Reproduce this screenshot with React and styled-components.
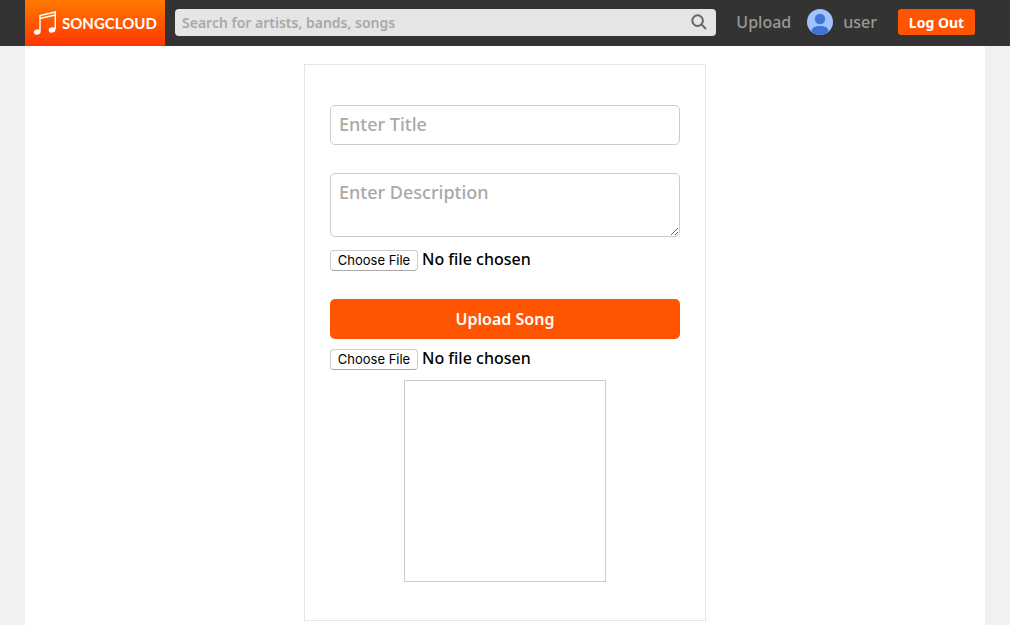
import React from 'react';
import styled, { createGlobalStyle } from 'styled-components';

const GlobalStyle = createGlobalStyle`
  *, *::before, *::after { box-sizing: border-box; }
  body {
    margin: 0;
    background: #f1f1f1;
    color: #000;
    font-family: "Noto Sans", "Open Sans", sans-serif;
    font-size: 16px;
  }
  input, textarea, button { font-family: inherit; }
`;

const Page = styled.div`
  display: flex;
  flex-direction: column;
  min-height: 100vh;
`;

const Header = styled.header`
  background: #333;
`;

const HeaderInner = styled.div`
  display: flex;
  align-items: center;
  max-width: 960px;
  height: 46px;
  margin: 0 auto;
  padding: 0 10px 2px 0;
`;

const Logo = styled.a`
  display: flex;
  align-items: center;
  align-self: flex-start;
  gap: 5px;
  flex: none;
  width: 140px;
  height: 46px;
  padding-left: 8px;
  background: linear-gradient(#ff7a00, #ff3600);
  color: #fff;
  font-family: Lato, sans-serif;
  font-size: 15px;
  font-weight: 700;
  text-decoration: none;
`;

const SearchBar = styled.form`
  display: flex;
  align-items: center;
  flex: 1;
  min-width: 0;
  height: 27px;
  margin: 0 20px 0 10px;
  padding: 0 9px 0 7px;
  border-radius: 4px;
  background: #e5e5e5;
`;

const SearchInput = styled.input`
  flex: 1;
  min-width: 0;
  padding: 0;
  border: 0;
  outline: 0;
  background: transparent;
  font-size: 14px;
  font-weight: 600;
  &::placeholder { color: #a9a9a9; }
`;

const SearchButton = styled.button`
  display: flex;
  padding: 0;
  border: 0;
  background: transparent;
  color: #666;
`;

const Nav = styled.nav`
  display: flex;
  align-items: center;
  flex: none;
`;

const NavLink = styled.a`
  display: flex;
  align-items: center;
  gap: 10px;
  margin-right: ${({ $gap }) => $gap}px;
  color: #999;
  font-size: 16px;
  font-weight: 500;
  line-height: 24px;
  text-decoration: none;
`;

const LogOutButton = styled.button`
  width: 77px;
  height: 26px;
  padding: 0;
  border: 0;
  border-radius: 3px;
  background: #f50;
  color: #fff;
  font-size: 14px;
  font-weight: 700;
`;

const Content = styled.main`
  flex: 1;
  width: 100%;
  max-width: 960px;
  margin: 0 auto;
  padding: 18px 10px 4px;
  background: #fff;
`;

const UploadForm = styled.form`
  display: flex;
  flex-direction: column;
  max-width: 402px;
  margin: 0 auto;
  padding: 40px 25px 38px;
  border: 1px solid #e5e5e5;
`;

const TitleInput = styled.input`
  height: 40px;
  margin-bottom: 28px;
  padding: 0 8px 2px;
  border: 1px solid #ccc;
  border-radius: 5px;
  font-size: 18px;
  font-weight: 500;
  &::placeholder { color: #a9a9a9; }
`;

const DescriptionInput = styled.textarea`
  height: 64px;
  margin-bottom: 10px;
  padding: 6px 8px;
  border: 1px solid #ccc;
  border-radius: 5px;
  font-size: 18px;
  font-weight: 500;
  line-height: 24px;
  resize: vertical;
  &::placeholder { color: #a9a9a9; }
`;

const FileInput = styled.input`
  width: 100%;
  height: 26px;
  margin-bottom: ${({ $after }) => $after}px;
  font-size: 16px;
  font-weight: 500;
  line-height: 24px;
  &::file-selector-button {
    width: 88px;
    height: 21px;
    margin: 0 4px 0 0;
    padding: 0;
    border: 1px solid #ccc;
    border-bottom-color: #aaa;
    border-radius: 4px;
    background: #fff;
    color: #000;
    font-family: Inter, sans-serif;
    font-size: 13px;
    font-weight: 400;
  }
`;

const SubmitButton = styled.button`
  height: 40px;
  margin-bottom: 7px;
  border: 0;
  border-radius: 5px;
  background: #f50;
  color: #fff;
  font-size: 16px;
  font-weight: 600;
`;

const Preview = styled.div`
  align-self: center;
  width: 202px;
  height: 202px;
  border: 1px solid #ccc;
`;

const NotesIcon = () => (
  <svg width="24" height="26" viewBox="0 0 24 26" fill="none" aria-hidden="true">
    <path d="M7 21V5.500L22.300 2V19" stroke="#fff" strokeWidth="1.4" />
    <path d="M7 8.500L22 5" stroke="#fff" strokeWidth="1.3" />
    <ellipse cx="4.2" cy="22" rx="3.4" ry="2.6" transform="rotate(-14 4.2 22)" fill="#fff" />
    <ellipse cx="19" cy="20" rx="3.4" ry="2.6" transform="rotate(-14 19 20)" fill="#fff" />
  </svg>
);

const SearchIcon = () => (
  <svg width="16" height="16" viewBox="0 0 16 16" fill="none" stroke="currentColor" strokeWidth="2" aria-hidden="true">
    <circle cx="6.6" cy="6.6" r="5.3" />
    <path d="M10.400 10.400L15 15" />
  </svg>
);

const Avatar = () => (
  <svg width="26" height="26" viewBox="0 0 26 26" aria-hidden="true">
    <defs>
      <clipPath id="avatar-disc"><circle cx="13" cy="13" r="13" /></clipPath>
    </defs>
    <g clipPath="url(#avatar-disc)">
      <rect width="26" height="26" fill="#a1c2fa" />
      <circle cx="13" cy="10" r="5.2" fill="#4273db" />
      <path d="M4.500 26V22.500C4.500 18.700 8 17 13 17S21.500 18.700 21.500 22.500V26Z" fill="#4273db" />
    </g>
  </svg>
);

export default function App() {
  return (
    <Page>
      <GlobalStyle />
      <Header>
        <HeaderInner>
          <Logo href="#home">
            <NotesIcon />
            SONGCLOUD
          </Logo>
          <SearchBar role="search">
            <SearchInput aria-label="Search" placeholder="Search for artists, bands, songs" />
            <SearchButton type="button" aria-label="Search">
              <SearchIcon />
            </SearchButton>
          </SearchBar>
          <Nav>
            <NavLink href="#upload" $gap={16}>Upload</NavLink>
            <NavLink href="#user" $gap={21}>
              <Avatar />
              user
            </NavLink>
            <LogOutButton type="button">Log Out</LogOutButton>
          </Nav>
        </HeaderInner>
      </Header>
      <Content>
        <UploadForm>
          <TitleInput type="text" aria-label="Title" placeholder="Enter Title" />
          <DescriptionInput aria-label="Description" placeholder="Enter Description" />
          <FileInput type="file" aria-label="Song file" $after={26} />
          <SubmitButton type="button">Upload Song</SubmitButton>
          <FileInput type="file" aria-label="Cover image" $after={8} />
          <Preview />
        </UploadForm>
      </Content>
    </Page>
  );
}
